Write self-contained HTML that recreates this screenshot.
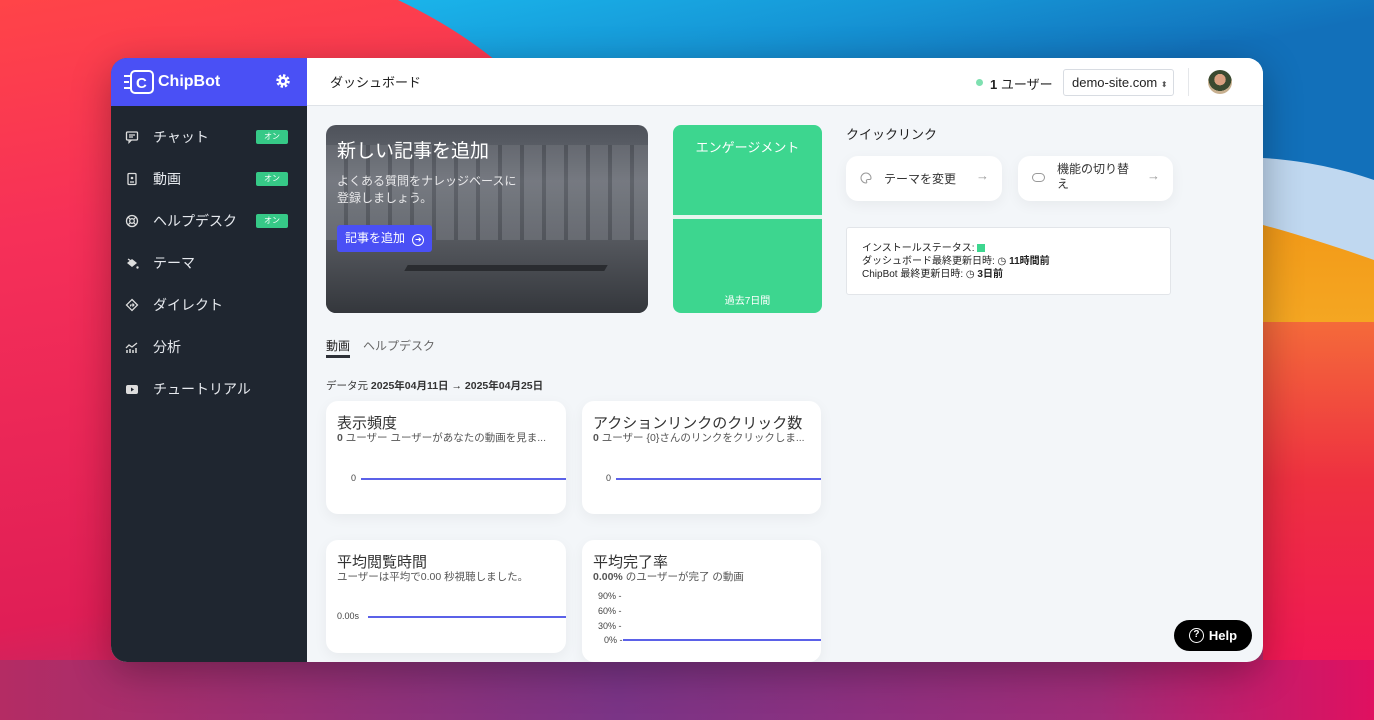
<!DOCTYPE html>
<html><head><meta charset="utf-8"><style>
*{box-sizing:border-box;margin:0;padding:0}
body{width:1374px;height:720px;overflow:hidden;position:relative;font-family:"Liberation Sans","Noto Sans CJK JP",sans-serif;background:#e3264a}
.bg{position:absolute;left:0;top:0}
.win{position:absolute;left:111px;top:58px;width:1152px;height:604px;border-radius:16px;overflow:hidden;background:#f3f6f9;box-shadow:0 10px 40px rgba(0,0,0,.3)}
.side{position:absolute;left:0;top:0;width:196px;height:604px;background:#1f2630}
.brand{height:48px;background:#4a50f5;display:flex;align-items:center;padding-left:12px;color:#fff;font-size:16px;font-weight:bold}
.nav{list-style:none;padding-top:10px}
.nav li{height:42px;display:flex;align-items:center;color:#e6e9ee;font-size:14px;padding-left:14px;position:relative}
.nav li svg{width:14px;height:14px;margin-right:14px}
.badge{position:absolute;left:145px;background:#36c987;color:#fff;font-size:8px;width:32px;height:14px;border-radius:2px;text-align:center;line-height:14px}
.top{position:absolute;left:196px;top:0;right:0;height:48px;background:#fff;border-bottom:1px solid #dfe3e8;display:flex;align-items:center;font-size:13px;color:#222}
.card{position:absolute;background:#fff;border-radius:12px;box-shadow:0 4px 14px rgba(0,0,0,.05)}
.ct{font-size:15px;color:#333;position:absolute;left:11px;top:11px}
.cs{font-size:10.5px;color:#555;position:absolute;left:11px;top:29px;white-space:nowrap}
.ln{position:absolute;height:2px;background:#5b61e8}
.ax{position:absolute;font-size:9px;color:#444}
</style></head><body>
<svg class="bg" width="1374" height="720" viewBox="0 0 1374 720">
<defs>
<linearGradient id="bl" x1="0" y1="0" x2="1" y2="0.3"><stop offset="0" stop-color="#1ab4ea"/><stop offset="0.5" stop-color="#1696d6"/><stop offset="1" stop-color="#1270ba"/></linearGradient>
<linearGradient id="or" x1="0" y1="0" x2="0" y2="1"><stop offset="0" stop-color="#f29a18"/><stop offset="1" stop-color="#f7b02a"/></linearGradient>
<linearGradient id="rd" x1="0" y1="0" x2="0" y2="1"><stop offset="0" stop-color="#f46a3a"/><stop offset="0.4" stop-color="#ee3040"/><stop offset="1" stop-color="#f0105a"/></linearGradient>
<linearGradient id="bot" x1="0" y1="0" x2="1" y2="0"><stop offset="0" stop-color="#b42c64"/><stop offset="0.45" stop-color="#7a3486"/><stop offset="0.8" stop-color="#a02c78"/><stop offset="1" stop-color="#e01060"/></linearGradient>
<linearGradient id="lf" x1="0" y1="0" x2="0.3" y2="1"><stop offset="0" stop-color="#ff4448"/><stop offset="0.3" stop-color="#f63058"/><stop offset="0.8" stop-color="#e01e56"/><stop offset="1" stop-color="#b02c6c"/></linearGradient>
</defs>
<rect width="1374" height="720" fill="url(#lf)"/>
<path d="M398 0 C440 20 470 40 495 60 L1374 60 L1374 0Z" fill="url(#bl)"/>
<rect x="1200" y="40" width="174" height="300" fill="#1270ba"/>
<path d="M1263 158 C1300 160 1340 168 1374 180 L1374 400 L1263 400Z" fill="#c0d8f0"/>
<path d="M1263 225 C1300 235 1340 248 1374 260 L1374 400 L1263 400Z" fill="url(#or)"/>
<path d="M1263 322 L1374 322 L1374 720 L1263 720Z" fill="url(#rd)"/>
<rect x="0" y="660" width="1374" height="60" fill="url(#bot)"/>
</svg>
<div class="win">
<div class="side">
<div class="brand"><svg width="32" height="26" viewBox="0 0 32 26"><path d="M1 7h6M1 13h5M1 19h6" stroke="#fff" stroke-width="2"/><rect x="8" y="2" width="22" height="22" rx="4" fill="none" stroke="#fff" stroke-width="2"/><text x="13" y="19" fill="#fff" font-size="15" font-weight="bold" font-family="Liberation Sans">C</text></svg><span style="margin-left:3px">ChipBot</span>
<svg style="position:absolute;left:164px;top:15px" width="16" height="16" viewBox="0 0 16 16"><circle cx="8" cy="8" r="5" fill="none" stroke="#fff" stroke-width="3.5" stroke-dasharray="2.2 1.7"/><circle cx="8" cy="8" r="4.5" fill="#fff"/><circle cx="8" cy="8" r="2" fill="#4a50f5"/></svg></div>
<ul class="nav">
<li><svg viewBox="0 0 14 14"><rect x="1.5" y="2" width="11" height="8" rx="1" fill="none" stroke="#ddd" stroke-width="1.3"/><path d="M4 5h6M4 7h4M4 10v2.5l2.5-2.5" stroke="#ddd" stroke-width="1.2" fill="none"/></svg>チャット<span class="badge">オン</span></li>
<li><svg viewBox="0 0 14 14"><rect x="3" y="1.5" width="8" height="11" rx="1" fill="none" stroke="#ddd" stroke-width="1.3"/><circle cx="7" cy="6" r="1.3" fill="#ddd"/><path d="M5 10h4" stroke="#ddd" stroke-width="1.3"/></svg>動画<span class="badge">オン</span></li>
<li><svg viewBox="0 0 14 14"><circle cx="7" cy="7" r="5.5" fill="none" stroke="#ddd" stroke-width="1.3"/><circle cx="7" cy="7" r="2.3" fill="none" stroke="#ddd" stroke-width="1.3"/><path d="M3 3l2.3 2.3M11 3L8.7 5.3M3 11l2.3-2.3M11 11L8.7 8.7" stroke="#ddd" stroke-width="1.2"/></svg>ヘルプデスク<span class="badge">オン</span></li>
<li><svg viewBox="0 0 14 14"><path d="M2 7l5-4 5 4-5 4z" fill="#ddd"/><path d="M3 3l3 2" stroke="#ddd" stroke-width="1.3"/><circle cx="12.5" cy="11.5" r="1.2" fill="#ddd"/></svg>テーマ</li>
<li><svg viewBox="0 0 14 14"><path d="M7 1.5l5.5 5.5L7 12.5 1.5 7z" fill="none" stroke="#ddd" stroke-width="1.3"/><path d="M5.5 8.5V7h3M7.5 5.5L9 7 7.5 8.5" stroke="#ddd" stroke-width="1.1" fill="none"/></svg>ダイレクト</li>
<li><svg viewBox="0 0 14 14"><path d="M1 8l3-3 3 2 5-4" stroke="#ddd" stroke-width="1.3" fill="none"/><path d="M2 13v-3M5 13v-4M8 13v-3M11 13v-5" stroke="#ddd" stroke-width="1.5"/></svg>分析</li>
<li><svg viewBox="0 0 14 14"><rect x="1" y="3" width="12" height="9" rx="2" fill="#ddd"/><path d="M6 5.5v4l3-2z" fill="#1f2630"/></svg>チュートリアル</li>
</ul></div>
<div class="top"><span style="margin-left:23px">ダッシュボード</span>
<span style="position:absolute;left:669px;top:21px;width:7px;height:7px;border-radius:50%;background:#7ee0b0"></span>
<span style="position:absolute;left:683px;top:16px;font-weight:bold;font-size:13px">1 <span style="font-weight:normal">ユーザー</span></span>
<div style="position:absolute;left:756px;top:11px;width:111px;height:27px;border:1px solid #d8dce2;border-radius:3px;font-size:13px;line-height:25px;padding-left:8px">demo-site.com <span style="font-size:8px;color:#555">⬍</span></div>
<div style="position:absolute;left:881px;top:10px;width:1px;height:28px;background:#e5e7ea"></div>
<div style="position:absolute;left:901px;top:12px;width:24px;height:24px;border-radius:50%;background:radial-gradient(circle at 50% 40%,#d9a080 0 30%,#3a4a30 31% 60%,#c8b090 61%)"></div>
</div>
<div style="position:absolute;left:215px;top:67px;width:322px;height:188px;border-radius:10px;overflow:hidden;background:linear-gradient(180deg,#4e525a 0%,#6a6e76 30%,#5b5f66 60%,#3e4248 100%)">
<div style="position:absolute;left:0;top:20px;width:322px;height:100px;background:repeating-linear-gradient(90deg,rgba(255,255,255,.08) 0 18px,rgba(0,0,0,.1) 18px 22px)"></div>
<div style="position:absolute;left:0;top:115px;width:322px;height:73px;background:linear-gradient(180deg,#55585e,#34373c)"></div>
<div style="position:absolute;left:80px;top:140px;width:200px;height:6px;background:#2a2c30;transform:skewX(-30deg)"></div>
<div style="position:absolute;left:11px;top:11px;color:#fff;font-size:19px">新しい記事を追加</div>
<div style="position:absolute;left:11px;top:48px;color:#e8e8ea;font-size:12px;line-height:17px">よくある質問をナレッジベースに<br>登録しましょう。</div>
<div style="position:absolute;left:11px;top:100px;background:#4a50f5;color:#fff;font-size:12px;padding:0 8px;height:27px;line-height:27px;border-radius:3px">記事を追加 <span style="display:inline-block;width:12px;height:12px;border:1.5px solid #fff;border-radius:50%;font-size:8px;line-height:9px;text-align:center;margin-left:4px">➜</span></div></div>
<div style="position:absolute;left:562px;top:67px;width:149px;height:188px;border-radius:8px;overflow:hidden;background:#3dd68f">
<div style="position:absolute;left:0;top:90px;width:149px;height:4px;background:#e8f5ee"></div>
<div style="position:absolute;width:100%;top:12px;text-align:center;color:#fff;font-size:13px">エンゲージメント</div>
<div style="position:absolute;width:100%;top:167px;text-align:center;color:#fff;font-size:10px">過去7日間</div></div>
<div style="position:absolute;left:735px;top:66px;font-size:13px;color:#222">クイックリンク</div>
<div class="card" style="left:735px;top:98px;width:156px;height:45px"><svg style="position:absolute;left:14px;top:16px" width="12" height="12" viewBox="0 0 12 12"><path d="M6 1a5 5 0 1 0 0 10c1 0 1-1 .5-1.7S6.5 7.5 8 7.5h1.5A1.5 1.5 0 0 0 11 6 5 5 0 0 0 6 1z" fill="none" stroke="#999" stroke-width="1"/></svg><span style="position:absolute;left:38px;top:14px;font-size:12px;color:#333">テーマを変更</span><span style="position:absolute;left:130px;top:12px;color:#999;font-size:13px">→</span></div>
<div class="card" style="left:907px;top:98px;width:155px;height:45px"><span style="position:absolute;left:14px;top:17px;width:13px;height:9px;border:1.3px solid #999;border-radius:5px"></span><span style="position:absolute;left:39px;top:6px;font-size:12px;color:#333;line-height:15px">機能の切り替<br>え</span><span style="position:absolute;left:129px;top:12px;color:#999;font-size:13px">→</span></div>
<div style="position:absolute;left:735px;top:169px;width:325px;height:68px;background:#fff;border:1px solid #e2e5e9;border-radius:3px;font-size:10px;color:#222;padding:14px 0 0 15px;line-height:13px">インストールステータス: <span style="display:inline-block;width:8px;height:8px;background:#3dd68f;vertical-align:-1px"></span><br>ダッシュボード最終更新日時: ◷ <b>11時間前</b><br>ChipBot 最終更新日時: ◷ <b>3日前</b></div>
<div style="position:absolute;left:215px;top:279px;font-size:12px;color:#222">動画</div>
<div style="position:absolute;left:215px;top:297px;width:24px;height:3px;background:#2d3138"></div>
<div style="position:absolute;left:252px;top:279px;font-size:12px;color:#666">ヘルプデスク</div>
<div style="position:absolute;left:215px;top:320px;font-size:10.5px;color:#333">データ元 <b>2025年04月11日</b> → <b>2025年04月25日</b></div>
<div class="card" style="left:215px;top:343px;width:240px;height:113px"><div class="ct">表示頻度</div><div class="cs"><b>0</b> ユーザー ユーザーがあなたの動画を見ま...</div><span class="ax" style="left:25px;top:72px">0</span><div class="ln" style="left:35px;top:77px;width:205px"></div></div>
<div class="card" style="left:471px;top:343px;width:239px;height:113px"><div class="ct">アクションリンクのクリック数</div><div class="cs"><b>0</b> ユーザー {0}さんのリンクをクリックしま...</div><span class="ax" style="left:24px;top:72px">0</span><div class="ln" style="left:34px;top:77px;width:205px"></div></div>
<div class="card" style="left:215px;top:482px;width:240px;height:113px"><div class="ct">平均閲覧時間</div><div class="cs">ユーザーは平均で0.00 秒視聴しました。</div><span class="ax" style="left:11px;top:71px">0.00s</span><div class="ln" style="left:42px;top:76px;width:198px"></div></div>
<div class="card" style="left:471px;top:482px;width:239px;height:122px"><div class="ct">平均完了率</div><div class="cs"><b>0.00%</b> のユーザーが完了 の動画</div>
<span class="ax" style="left:16px;top:51px">90% -</span><span class="ax" style="left:16px;top:66px">60% -</span><span class="ax" style="left:16px;top:81px">30% -</span><span class="ax" style="left:22px;top:95px">0% -</span><div class="ln" style="left:41px;top:99px;width:198px"></div></div>
</div>
<div style="position:absolute;left:1174px;top:620px;width:78px;height:31px;border-radius:16px;background:#000;color:#fff;font-size:13px;font-weight:bold;display:flex;align-items:center;justify-content:center;gap:5px"><span style="width:15px;height:15px;border:1.5px solid #fff;border-radius:50%;font-size:10px;line-height:12px;text-align:center">?</span>Help</div>
</body></html>
